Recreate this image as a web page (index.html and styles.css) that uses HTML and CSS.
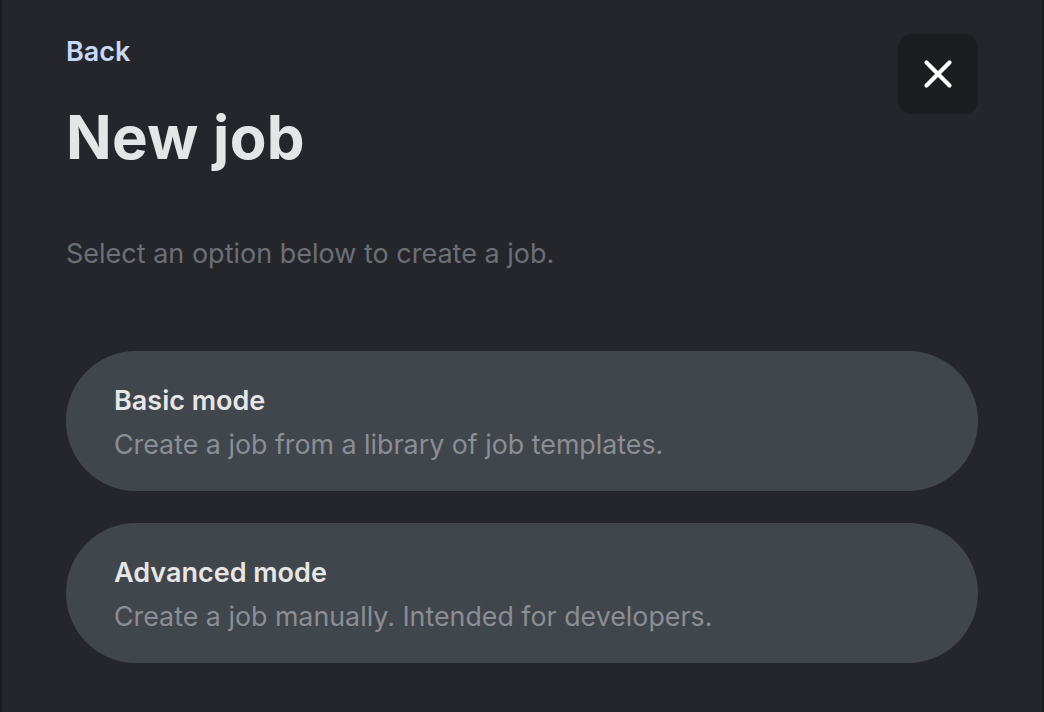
FILE: index.html
```html
<!DOCTYPE html>
<html lang="en">
<head>
<meta charset="utf-8">
<title>New job</title>
<link rel="stylesheet" href="styles.css">
</head>
<body>
<div class="backdrop">
  <div class="panel">
    <header class="head">
      <div class="head-text">
        <a class="back" href="#">Back</a>
        <h1 class="title">New job</h1>
      </div>
      <button class="close" aria-label="Close">
        <svg width="30" height="30" viewBox="0 0 30 30" fill="none" stroke="#ffffff" stroke-width="4.2" stroke-linecap="round">
          <path d="M3.5 3.5L26.5 26.5M26.5 3.5L3.5 26.5"/>
        </svg>
      </button>
    </header>
    <p class="lead">Select an option below to create a job.</p>
    <div class="options">
      <a class="option" href="#">
        <span class="opt-title">Basic mode</span>
        <span class="opt-desc">Create a job from a library of job templates.</span>
      </a>
      <a class="option" href="#">
        <span class="opt-title">Advanced mode</span>
        <span class="opt-desc">Create a job manually. Intended for developers.</span>
      </a>
    </div>
  </div>
</div>
</body>
</html>
```
FILE: styles.css
```css
html, body {
  margin: 0;
  padding: 0;
  background: #1a1b1e;
  height: 100%;
}
body {
  font-family: Inter, "Liberation Sans", sans-serif;
}
.backdrop {
  height: 712px;
  padding-left: 2px;
  padding-right: 2px;
  box-sizing: border-box;
}
.panel {
  background: #25262b;
  height: 100%;
  box-sizing: border-box;
  padding: 34px 64px 0 64px;
}
.head {
  display: flex;
  justify-content: space-between;
  align-items: flex-start;
}
.head-text {
  display: flex;
  flex-direction: column;
}
.back {
  color: #c9d8f5;
  font-size: 27px;
  font-weight: 600;
  text-decoration: none;
  line-height: 36px;
  align-self: flex-start;
}
.title {
  margin: 31px 0 0;
  color: #e4e5e6;
  font-size: 60px;
  font-weight: 700;
  line-height: 72px;
  letter-spacing: 0.3px;
}
.close {
  width: 80px;
  height: 80px;
  border: 0;
  border-radius: 14px;
  background: #1c1d21;
  display: flex;
  align-items: center;
  justify-content: center;
  padding: 0;
  cursor: pointer;
}
.lead {
  margin: 63px 0 0;
  color: #6c6f75;
  font-size: 27px;
  line-height: 36px;
}
.options {
  margin-top: 79px;
  display: flex;
  flex-direction: column;
  gap: 32px;
}
.option {
  height: 140px;
  box-sizing: border-box;
  border-radius: 70px;
  background: #41454c;
  display: flex;
  flex-direction: column;
  padding: 32px 48px 0;
  text-decoration: none;
  gap: 7px;
}
.opt-title {
  color: #e6e6e7;
  font-size: 27px;
  font-weight: 600;
  line-height: 36px;
}
.opt-desc {
  color: #8b8e94;
  font-size: 26.8px;
  line-height: 36px;
}
```
